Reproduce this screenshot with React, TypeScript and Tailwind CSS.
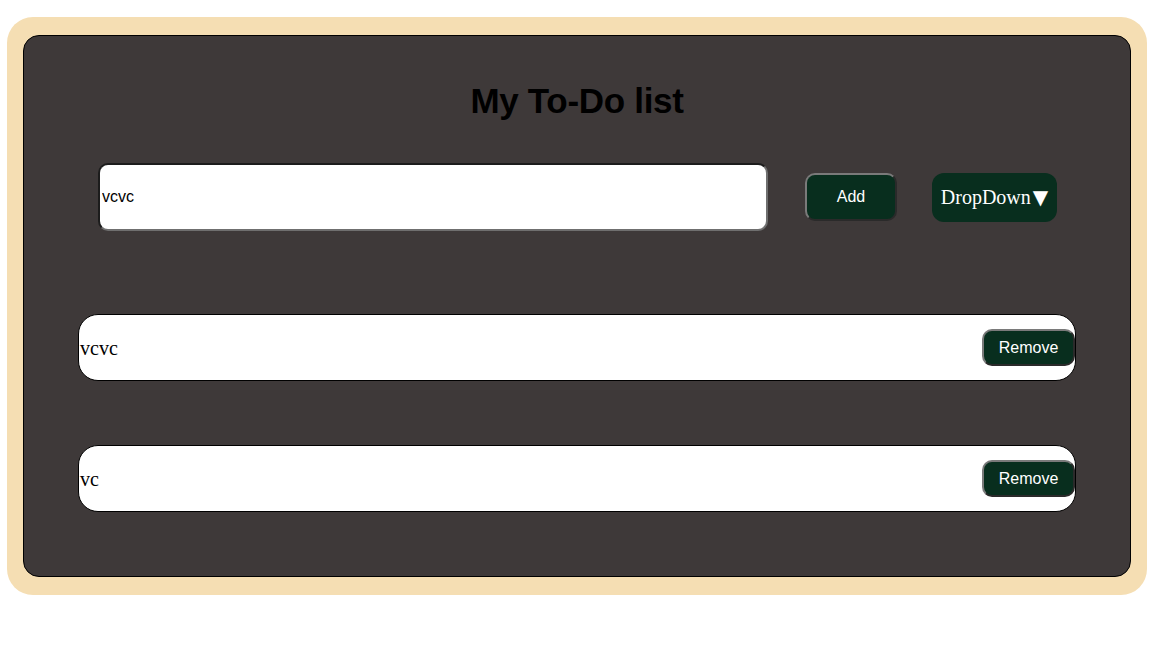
import React, { useState } from 'react';

const App: React.FC = () => {
  const [text, setText] = useState('vcvc');
  const [todos, setTodos] = useState<string[]>(['vcvc', 'vc']);

  const addTodo = () => {
    if (!text.trim()) return;
    setTodos([...todos, text]);
    setText('');
  };

  const removeTodo = (index: number) => setTodos(todos.filter((_, i) => i !== index));

  return (
    <div className="min-h-screen bg-white pt-[17px] pl-[7px]">
      {/* рамка */}
      <div className="w-[1140px] bg-[#f5deb3] rounded-[26px] pt-[18px] pb-[18px] pl-4 pr-4">
        <div className="w-[1108px] bg-[#3e3939] border border-black rounded-[16px] pt-[44px] pb-[64px]">
          <h1 className="text-center text-[35px] leading-[41px] font-bold text-black font-['Liberation_Sans',Arial,sans-serif] tracking-[-0.3px]">
            My To-Do list
          </h1>

          {/* строка ввода */}
          <div className="flex items-center mt-[42px] pl-[74px]">
            <input
              value={text}
              onChange={(e) => setText(e.target.value)}
              className="w-[670px] h-[68px] bg-white rounded-[10px] border-2 border-t-[#1c1c1c] border-l-[#1c1c1c] border-b-[#6f6f6f] border-r-[#6f6f6f] px-[2px] text-[16px] text-black font-['Liberation_Sans',Arial,sans-serif] outline-none"
            />
            <button
              onClick={addTodo}
              className="ml-[37px] w-[92px] h-[48px] bg-[#082e1e] rounded-[10px] border-2 border-t-[#7a7a7a] border-l-[#7a7a7a] border-b-[#2a2a2a] border-r-[#2a2a2a] text-white text-[16px] font-['Liberation_Sans',Arial,sans-serif]"
            >
              Add
            </button>
            <button className="ml-[35px] w-[125px] h-[49px] bg-[#082e1e] rounded-[12px] text-white text-[20px] font-['Liberation_Serif','Times_New_Roman',serif] flex items-center justify-center">
              DropDown<span className="ml-[2px] text-[20px] font-['DejaVu_Sans',sans-serif]">▼</span>
            </button>
          </div>

          {/* список */}
          <div className="mt-[83px] px-[54px] flex flex-col gap-[64px]">
            {todos.map((todo, i) => (
              <div
                key={i}
                className="h-[67px] bg-white border border-black rounded-[20px] flex items-center justify-between pl-[1px]"
              >
                <span className="text-[20px] text-black font-['Liberation_Serif','Times_New_Roman',serif]">{todo}</span>
                <button
                  onClick={() => removeTodo(i)}
                  className="h-[37px] w-[93px] bg-[#082e1e] rounded-[10px] border-2 border-t-[#7a7a7a] border-l-[#7a7a7a] border-b-[#2a2a2a] border-r-[#2a2a2a] text-white text-[16px] font-['Liberation_Sans',Arial,sans-serif]"
                >
                  Remove
                </button>
              </div>
            ))}
          </div>
        </div>
      </div>
    </div>
  );
};

export default App;
